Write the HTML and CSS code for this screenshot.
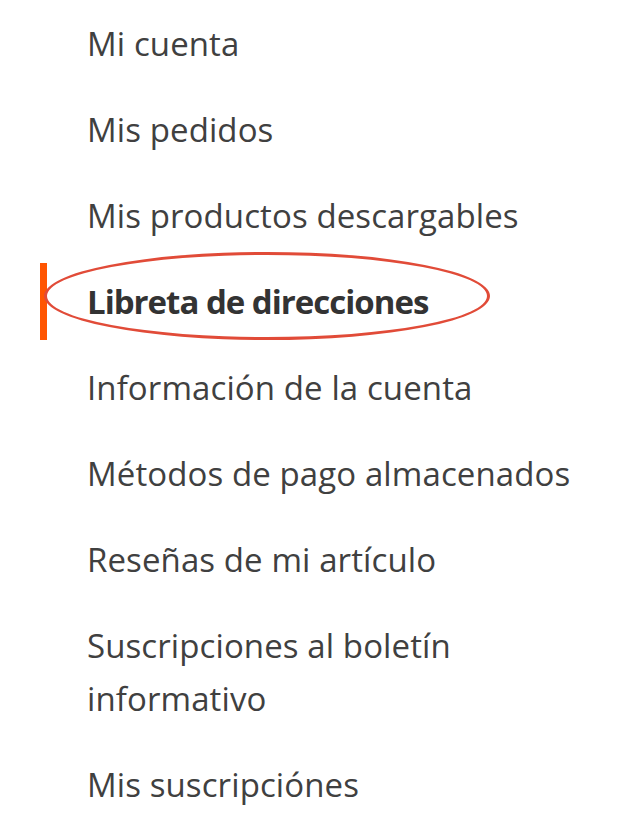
FILE: index.html
```html
<!DOCTYPE html>
<html lang="es">
<head>
    <meta charset="UTF-8">
    <meta name="viewport" content="width=device-width, initial-scale=1.0">
    <title>Mi cuenta</title>
    <link rel="stylesheet" href="styles.css">
</head>
<body>
    <nav class="account-nav">
        <ul class="nav-items">
            <li class="nav-item"><a href="#">Mi cuenta</a></li>
            <li class="nav-item"><a href="#">Mis pedidos</a></li>
            <li class="nav-item"><a href="#">Mis productos descargables</a></li>
            <li class="nav-item current">
                <strong>Libreta de direcciones</strong>
                <span class="highlight"></span>
            </li>
            <li class="nav-item"><a href="#">Información de la cuenta</a></li>
            <li class="nav-item"><a href="#">Métodos de pago almacenados</a></li>
            <li class="nav-item"><a href="#">Reseñas de mi artículo</a></li>
            <li class="nav-item"><a href="#">Suscripciones al boletín informativo</a></li>
            <li class="nav-item"><a href="#">Mis suscripciónes</a></li>
        </ul>
    </nav>
</body>
</html>
```

FILE: styles.css
```css
body {
    margin: 0;
    background-color: #ffffff;
    font-family: 'Open Sans', 'Noto Sans', sans-serif;
}
.account-nav {
    width: 583px;
    padding-left: 40px;
}
.nav-items {
    list-style: none;
    margin: 0;
    padding: 5px 0 0;
    display: flex;
    flex-direction: column;
    gap: 9px;
}
.nav-item {
    position: relative;
}
.nav-item a,
.nav-item strong {
    display: block;
    border-left: 7px solid transparent;
    padding: 12px 0 12px 40px;
    font-size: 33px;
    line-height: 53px;
    letter-spacing: 0.1px;
    color: #404040;
    text-decoration: none;
}
.nav-item.current strong {
    border-left-color: #ff5501;
    color: #333333;
    font-weight: 700;
    letter-spacing: -1px;
}
.highlight {
    position: absolute;
    left: 4px;
    top: -11px;
    width: 446px;
    height: 88px;
    border: 3px solid #e14b38;
    border-radius: 50%;
    box-sizing: border-box;
    pointer-events: none;
}
```
